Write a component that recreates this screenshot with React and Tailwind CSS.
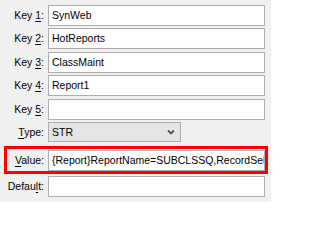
import React from "react";

const font = { fontFamily: '"Liberation Sans", Arial, sans-serif' };

function Label({ pre, acc, post, w = "w-[48px]" }) {
  return (
    <div className={`${w} shrink-0 text-right pr-[4px] text-[10.5px] text-black leading-none`}>
      {pre}
      <span className="underline underline-offset-[2px]">{acc}</span>
      {post}
    </div>
  );
}

function Input({ value }) {
  return (
    <div className="flex-1 min-w-0 h-[21px] bg-white border border-[#adadad] flex items-center pl-[3px] text-[10.5px] text-black overflow-hidden whitespace-nowrap leading-none">
      {value}
    </div>
  );
}

export default function App() {
  return (
    <div className="w-[271px] h-[202px] bg-[#f0f0f0] overflow-hidden pt-[5px]" style={font}>
      <div className="flex items-center mr-[6px] h-[21px]">
        <Label pre="Key " acc="1" post=":" />
        <Input value="SynWeb" />
      </div>
      <div className="flex items-center mr-[6px] h-[21px] mt-[2px]">
        <Label pre="Key " acc="2" post=":" />
        <Input value="HotReports" />
      </div>
      <div className="flex items-center mr-[6px] h-[21px] mt-[3px]">
        <Label pre="Key " acc="3" post=":" />
        <Input value="ClassMaint" />
      </div>
      <div className="flex items-center mr-[6px] h-[21px] mt-[2px]">
        <Label pre="Key " acc="4" post=":" />
        <Input value="Report1" />
      </div>
      <div className="flex items-center mr-[6px] h-[21px] mt-[3px]">
        <Label pre="Key " acc="5" post=":" />
        <Input value="" />
      </div>
      <div className="flex items-center h-[20px] mt-[2px]">
        <Label pre="" acc="T" post="ype:" />
        <div className="w-[133px] h-[20px] bg-[#e5e5e5] border border-[#acacac] flex items-center justify-between pl-[3px] pr-[5px] text-[10.5px] text-black leading-none">
          <span>STR</span>
          <svg width="8" height="6" viewBox="0 0 8 6">
            <path d="M1 1.5 L4 4.5 L7 1.5" fill="none" stroke="#555" strokeWidth="1.8" />
          </svg>
        </div>
      </div>
      <div className="ml-[4px] mr-[3px] mt-[4px] border-[3px] border-[#ff0000] h-[28px] flex items-center">
        <Label w="w-[41px]" pre="" acc="V" post="alue:" />
        <Input value="{Report}ReportName=SUBCLSSQ,RecordSel" />
      </div>
      <div className="flex items-center mr-[6px] h-[21px] mt-[2px]">
        <Label pre="Defau" acc="l" post="t:" />
        <Input value="" />
      </div>
    </div>
  );
}
